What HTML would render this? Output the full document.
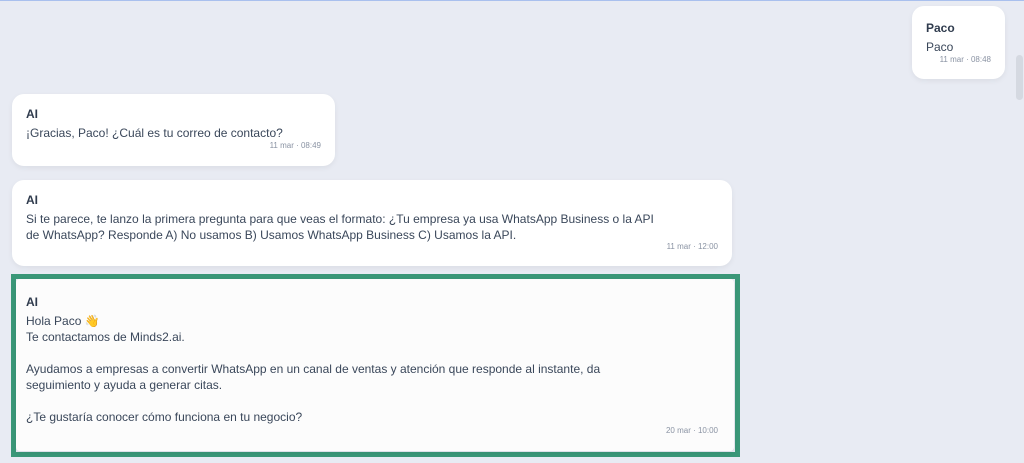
<!DOCTYPE html><html><head><style>
body{margin:0;width:1024px;height:463px;background:#e8ebf3;font-family:"Liberation Sans",sans-serif;color:#3a475a;position:relative;overflow:hidden;border-top:1px solid #a9c0ee;box-sizing:border-box}
.b{position:absolute;background:#fff;border-radius:12px;box-shadow:0 2px 6px rgba(0,0,0,.06);font-size:12px;line-height:16px;box-sizing:border-box;padding:13px 14px 0 14px}
.n{font-weight:bold;font-size:12px;margin-bottom:3px;color:#2f3b4d}
.t{position:absolute;right:14px;bottom:9px;font-size:8px;color:#8a93a3}
</style></head><body>
<div class="b" style="left:912px;top:5px;width:93px;height:73px;padding-top:14px"><div class="n">Paco</div><div style="font-size:12px;margin-top:2px">Paco</div><div class="t" style="bottom:11px">11 mar · 08:48</div></div>
<div style="position:absolute;left:1016px;top:54px;width:7px;height:45px;background:#d5d9e1;border-radius:4px"></div>
<div class="b" style="left:12px;top:93px;width:323px;height:72px;padding-top:12px"><div class="n">AI</div>¡Gracias, Paco! ¿Cuál es tu correo de contacto?<div class="t" style="bottom:12px">11 mar · 08:49</div></div>
<div class="b" style="left:12px;top:179px;width:720px;height:86px;padding-top:12px"><div class="n">AI</div>Si te parece, te lanzo la primera pregunta para que veas el formato: ¿Tu empresa ya usa WhatsApp Business o la API<br>de WhatsApp? Responde A) No usamos B) Usamos WhatsApp Business C) Usamos la API.<div class="t" style="bottom:11px">11 mar · 12:00</div></div>
<div style="position:absolute;left:11px;top:273px;width:729px;height:183px;border:5px solid #3a9778;box-sizing:border-box"></div>
<div class="b" style="left:16px;top:278px;width:718px;height:172px;border-radius:4px;padding:15px 10px 0 10px;background:#fcfcfc"><div class="n">AI</div><div style="line-height:16px">Hola Paco 👋<br>Te contactamos de Minds2.ai.<br><br>Ayudamos a empresas a convertir WhatsApp en un canal de ventas y atención que responde al instante, da<br>seguimiento y ayuda a generar citas.<br><br>¿Te gustaría conocer cómo funciona en tu negocio?</div><div class="t" style="right:16px;bottom:12px">20 mar · 10:00</div></div>
</body></html>
